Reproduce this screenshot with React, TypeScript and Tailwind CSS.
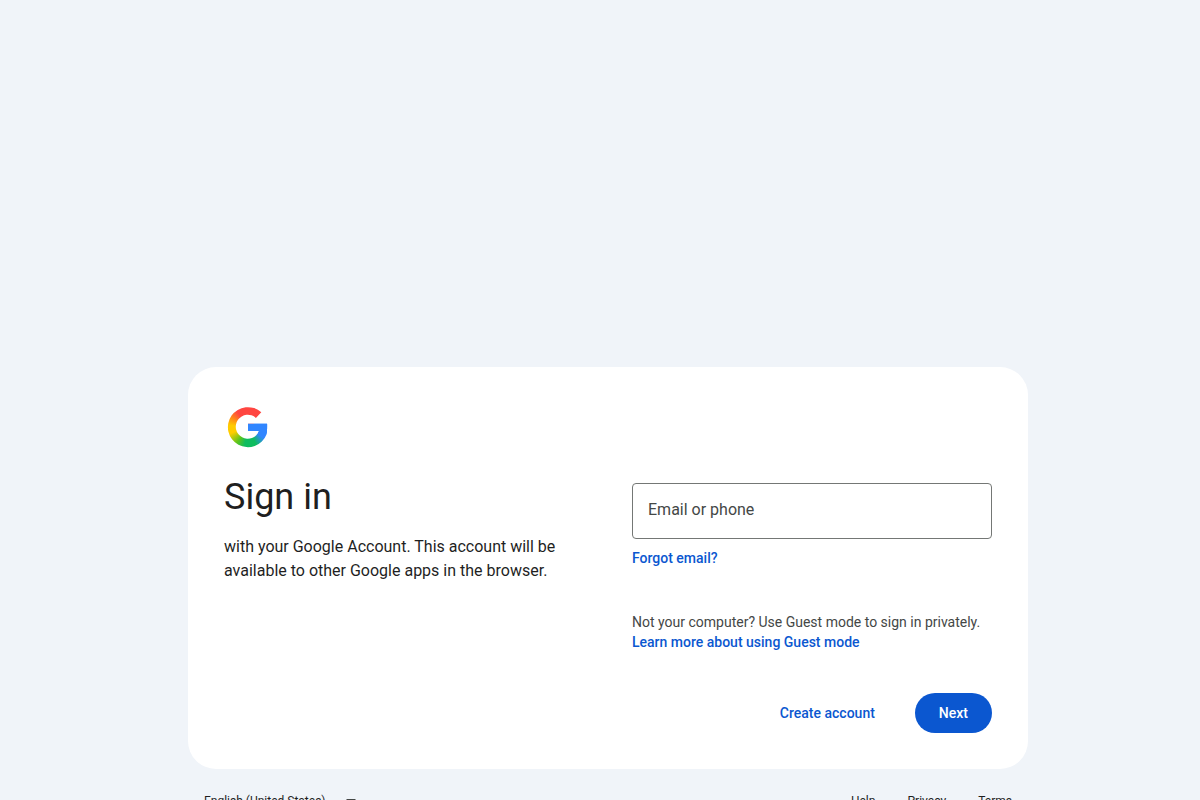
const footerLinks = ["Help", "Privacy", "Terms"];

function GoogleLogo() {
  return (
    <svg viewBox="0 0 48 48" className="size-12" aria-hidden="true">
      <defs>
        <clipPath id="g-shape">
          <path d="M37.3 9.3A20 20 0 1 0 42.5 31.5C43 29 43.2 26 43.1 20.7H24V28H35A12 12 0 1 1 31.9 14.9Z" />
        </clipPath>
      </defs>
      <g clipPath="url(#g-shape)">
        <foreignObject width="48" height="48">
          <div className="size-12 bg-[conic-gradient(#ff4641_0deg,#ff4641_60deg,#3186ff_61deg,#3186ff_125deg,#0ebc5f_155deg,#0ebc5f_190deg,#5cc41d_215deg,#fc0_250deg,#fc0_275deg,#ff8a17_300deg,#ff4641_325deg)]" />
        </foreignObject>
        <path d="M24 20H44V30L36 33L33 28H24Z" fill="#3186ff" />
      </g>
    </svg>
  );
}

function SignInCard() {
  return (
    <main className="rounded-[28px] bg-white p-9">
      <GoogleLogo />
      <div className="mt-6 grid grid-cols-1 gap-x-12 md:grid-cols-2">
        <div>
          <h1 className="text-4xl leading-11 text-[#1f1f1f]">Sign in</h1>
          <p className="mt-4 text-base text-[#1f1f1f]">
            with your Google Account. This account will be available to other
            Google apps in the browser.
          </p>
        </div>
        <form className="pt-2" onSubmit={(e) => e.preventDefault()}>
          <div className="relative">
            <input
              id="identifier"
              type="text"
              autoComplete="username"
              placeholder=" "
              className="peer block h-14 w-full rounded border border-[#747775] px-[15px] text-base text-[#1f1f1f] outline-none focus:border-[#0b57d0]"
            />
            {/* the label floats up onto the border once the field is in use */}
            <label
              htmlFor="identifier"
              className="pointer-events-none absolute top-4 left-3 bg-white px-1 text-base leading-[22px] text-[#444746] peer-focus:-top-3 peer-focus:text-xs peer-not-placeholder-shown:-top-3 peer-not-placeholder-shown:text-xs"
            >
              Email or phone
            </label>
          </div>
          <div className="mt-[9px] text-sm text-[#444746]">
            <a href="#forgot" className="font-medium text-[#0b57d0]">
              Forgot email?
            </a>
          </div>
          <p className="mt-11 text-sm text-[#444746]">
            Not your computer? Use Guest mode to sign in privately.{" "}
            <a href="#guest" className="block font-medium text-[#0b57d0]">
              Learn more about using Guest mode
            </a>
          </p>
          <div className="mt-[41px] flex justify-end gap-6">
            <button
              type="button"
              className="h-10 rounded-full px-4 text-sm font-medium text-[#0b57d0]"
            >
              Create account
            </button>
            <button
              type="submit"
              className="h-10 rounded-full bg-[#0b57d0] px-6 text-sm font-medium text-white"
            >
              Next
            </button>
          </div>
        </form>
      </div>
    </main>
  );
}

function Footer() {
  return (
    <footer className="mt-6 flex items-center justify-between px-4 text-xs text-[#1f1f1f]">
      <div className="grid items-center">
        <select
          aria-label="Language"
          className="col-start-1 row-start-1 h-4 w-40 appearance-none bg-transparent"
        >
          <option>English (United States)</option>
        </select>
        <svg
          viewBox="0 0 10 5"
          className="pointer-events-none col-start-1 row-start-1 mr-2 h-[5px] w-2.5 justify-self-end"
          aria-hidden="true"
        >
          <path d="M0 0h10L5 5Z" fill="#444746" />
        </svg>
      </div>
      <nav className="flex gap-8">
        {footerLinks.map((link) => (
          <a key={link} href={`#${link.toLowerCase()}`}>
            {link}
          </a>
        ))}
      </nav>
    </footer>
  );
}

export default function App() {
  return (
    <div className="h-screen overflow-hidden bg-[#f0f4f9] pt-[367px] pl-4 font-['Roboto',sans-serif]">
      <div className="mx-auto max-w-[840px]">
        <SignInCard />
        <Footer />
      </div>
    </div>
  );
}
